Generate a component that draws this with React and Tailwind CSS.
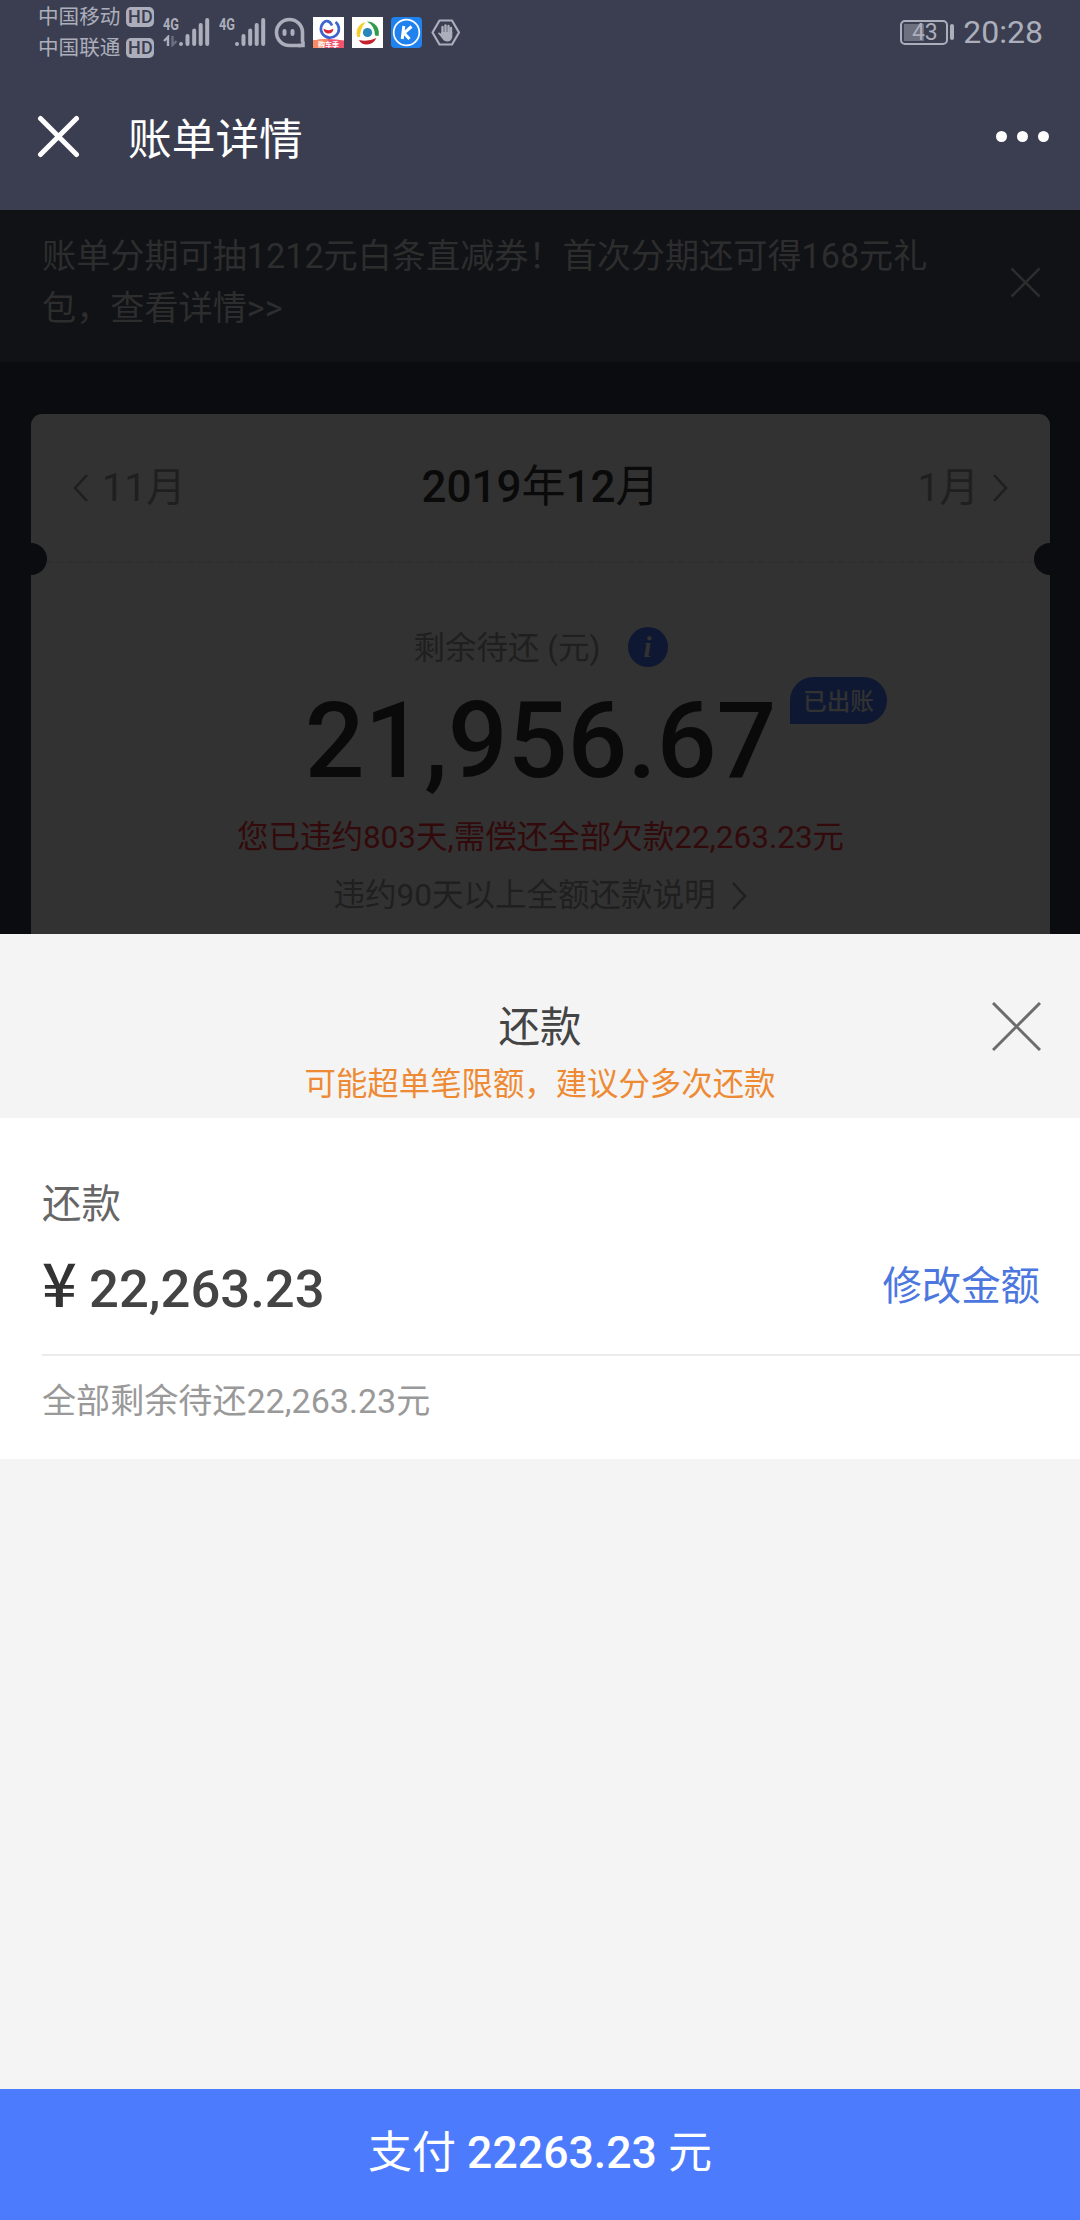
import React from 'react'

const STATUS = '#acaebb'

const Carrier = ({ name }) => (
    <div className="flex items-center h-[31px] gap-[6px]">
        <span className="text-[20.6px] leading-[31px]">{name}</span>
        <span className="flex items-center justify-center w-[28px] h-[20px] mb-px rounded-[5px] bg-[#acaebb] text-[#3b3e50] text-[18px] leading-[20px] font-medium">HD</span>
    </div>
)

const Signal = ({ data }) => (
    <div className="flex w-[47px] h-[32px]">
        <div className="w-[16px] text-[17px] leading-[15px] font-bold">
            <div className="w-[22px] origin-left scale-x-[0.75]">4G</div>
            {data && (
                <svg className="mt-[3px]" width="16" height="12" viewBox="0 0 16 12">
                    <path d="M5 11V2L1 6" fill="none" stroke={STATUS} strokeWidth="2.4" />
                    <path d="M9.5 1v9l4-4" fill="none" stroke="#6b6e7e" strokeWidth="2.4" />
                </svg>
            )}
        </div>
        <svg width="31" height="30" viewBox="0 0 31 30" stroke={STATUS} strokeWidth="4" strokeLinecap="round">
            <path d="M2 27v0M8.5 19v8M15.2 13.500v13.500M21.700 8v19M28.200 3v24" />
        </svg>
    </div>
)

const AppIcons = () => (
    <div className="flex items-center gap-[8px]">
        <svg width="31" height="31" viewBox="0 0 31 31" fill="none" stroke={STATUS}>
            <path d="M27 28.500H15.500A13 13 0 1 1 28.500 15.500V25" strokeWidth="3.6" />
            <path d="M24 28.500h5v-4" strokeWidth="3.600" />
            <path d="M10.500 14v3M18.500 14v3" strokeWidth="4" strokeLinecap="round" />
        </svg>
        <svg width="31" height="31" viewBox="0 0 31 31" fill="none">
            <path d="M0 0h31v31H0z" fill="#fff" />
            <path d="M0 23.500q15-3 31 0V31H0z" fill="#f0526f" />
            <path d="M0 23.500q8-2 15-1.500L10 31H0z" fill="#f98a62" />
            <path d="M19 8.500Q17 3.500 12.500 4.200A9 8.800 0 1 0 22.500 5" stroke="#3c63cf" strokeWidth="2.600" />
            <path d="M10.500 11.500q5 3.500 10 0-.5 5-5 5t-5-5z" fill="#d8293b" />
            <text x="15.500" y="29.500" fill="#fff" fontSize="7" fontWeight="700" textAnchor="middle">购车季</text>
        </svg>
        <svg width="31" height="31" viewBox="0 0 31 31" fill="none">
            <path d="M0 0h31v31H0z" fill="#fff" />
            <path d="M5.500 20A11 11 0 0 1 13.500 5Q8 12 8 20z" fill="#f4cf2c" />
            <path d="M15 4.500A11.500 11.500 0 0 1 26.500 19l-3.500-.5Q23 9 15 4.500z" fill="#2f9c49" />
            <path d="M7 23q9 2 17.500-2Q21 27.500 15 27.500T7 23z" fill="#c5202d" />
            <circle cx="15.500" cy="15.500" r="4.600" fill="#2787b8" />
        </svg>
        <svg width="31" height="31" viewBox="0 0 31 31" fill="none" stroke="#fff">
            <rect width="31" height="31" rx="4" fill="#2082ee" stroke="none" />
            <circle cx="15.500" cy="15.500" r="12.800" strokeWidth="1.700" />
            <path d="M12.800 9l-1.600 13M20.500 9.500l-7.500 6.500 5.500 6" strokeWidth="3" />
        </svg>
        <svg width="31" height="31" viewBox="0 0 31 31" fill="none" stroke={STATUS}>
            <path d="M9.500 3.500h12.500L29 15.500l-7 12H9.500l-7-12z" strokeWidth="2.200" strokeLinejoin="round" />
            <path d="M12.500 17v-7M15.500 15V8.500M18.500 15V9M21 16v-5" strokeWidth="2.400" strokeLinecap="round" />
            <path d="M11.300 15h11v5q-1 4.500-5 4.500-3.500 0-5-3L7.800 16q1.500-1.500 3.500 1z" fill={STATUS} stroke="none" />
        </svg>
    </div>
)

const StatusBar = () => (
    <div className="flex justify-between h-[64px] pl-[38px] pr-[37px] text-[#acaebb]">
        <div className="flex">
            <div className="w-[125px] pt-[2px]">
                <Carrier name="中国移动" />
                <Carrier name="中国联通" />
            </div>
            <div className="flex gap-[9px] pt-[17px]">
                <Signal data />
                <Signal />
            </div>
            <div className="pl-[8px] pt-[17px]">
                <AppIcons />
            </div>
        </div>
        <div className="flex items-center h-[64px]">
            <div className="flex items-center">
                <div className="relative flex items-center justify-center w-[48px] h-[25px] border-2 border-[#acaebb] rounded-[5px]">
                    <div className="absolute left-[2px] top-[2px] w-[20px] h-[17px] bg-[#6d707f]"></div>
                    <span className="relative pl-px text-[23px] leading-[25px]">43</span>
                </div>
                <div className="w-[4px] h-[16px] ml-[2px] rounded-[2px] bg-[#acaebb]"></div>
            </div>
            <span className="ml-[9px] text-[32px] leading-[64px]">20:28</span>
        </div>
    </div>
)

const Navbar = () => (
    <div className="flex items-center justify-between h-[146px] pl-[37px] pr-[31px] pb-[2px] text-white">
        <div className="flex items-center">
            <svg width="43" height="43" viewBox="0 0 43 43" stroke="#fff" strokeWidth="5" strokeLinecap="round">
                <path d="M3.500 3.500l36 36M39.500 3.500l-36 36" />
            </svg>
            <h1 className="ml-[48px] pt-[7px] text-[43.7px] leading-[60px]">账单详情</h1>
        </div>
        <div className="flex gap-[10px]">
            <i className="size-[11px] rounded-full bg-white"></i>
            <i className="size-[11px] rounded-full bg-white"></i>
            <i className="size-[11px] rounded-full bg-white"></i>
        </div>
    </div>
)

const Notice = () => (
    <div className="flex justify-between h-[152px] pl-[42px] pr-[39px] pt-[20px] bg-[#111216] text-[#2d2d2d]">
        <p className="w-[900px] text-[34.15px] leading-[52px]">账单分期可抽1212元白条直减券！首次分期还可得168元礼包，查看详情&gt;&gt;</p>
        <svg className="mt-[37px]" width="31" height="31" viewBox="0 0 31 31" stroke="#2d2d2d" strokeWidth="2.500">
            <path d="M1.500 1.500l28 28M29.500 1.500l-28 28" />
        </svg>
    </div>
)

const Chevron = ({ left, w = 15, h = 28 }) => (
    <svg className={left ? 'rotate-180' : ''} width={w} height={h} viewBox="0 0 15 28" fill="none" stroke="#1f1f1f" strokeWidth="2.500">
        <path d="M1 1l12 13L1 27" />
    </svg>
)

const BillCard = () => (
    <div className="relative ml-[31px] mr-[30px] mt-[52px] h-[520px] rounded-t-[11px] bg-[#323232] text-[#1f1f1f]">
        <div className="flex items-center justify-between h-[147px] px-[42px]">
            <div className="flex items-center gap-[14px] w-[150px]">
                <Chevron left />
                <span className="text-[39.4px] leading-[56px]">11月</span>
            </div>
            <h2 className="pb-[2px] text-[44px] leading-[56px] font-medium text-[#0a0a0a]">
                2019<span className="font-normal">年</span>12<span className="font-normal">月</span>
            </h2>
            <div className="flex items-center justify-end gap-[14px] w-[150px]">
                <span className="text-[39.4px] leading-[56px]">1月</span>
                <Chevron />
            </div>
        </div>
        <div className="mx-[16px] border-t-2 border-dashed border-[#2f2f2f]"></div>
        {/* ticket notches */}
        <div className="absolute left-0 top-[129px] w-[16px] h-[32px] rounded-r-full bg-[#0b0c10]"></div>
        <div className="absolute right-0 top-[129px] w-[16px] h-[32px] rounded-l-full bg-[#0b0c10]"></div>

        <div className="flex items-center justify-center mt-[60px] h-[48px] gap-[27px] text-[31.5px]">
            <span className="pt-[4px]">剩余待还 (元)</span>
            <span className="flex items-center justify-center size-[40px] rounded-full bg-[#0f1833] text-[#323232] text-[29px] leading-[40px] font-bold italic font-[Liberation_Serif,serif]">i</span>
        </div>
        <div className="relative flex justify-center h-[126px] text-[105.3px] leading-[140px] font-medium text-[#0a0a0a]">
            21,956.67
            <span className="absolute left-[759px] top-[6px] w-[97px] h-[47px] rounded-[24px] rounded-bl-none bg-[#0f1833] text-[#323232] text-center text-[23.6px] leading-[50px] font-medium">已出账</span>
        </div>
        <p className="mt-[17px] text-center text-[31.5px] leading-[48px] text-[#330a0c]">您已违约803天,需偿还全部欠款22,263.23元</p>
        <div className="flex items-center justify-center mt-[10px] gap-[17px] text-[31.5px] leading-[48px]">
            <span>违约90天以上全额还款说明</span>
            <Chevron />
        </div>
    </div>
)

const RepaySheet = () => (
    <div className="flex flex-col h-[1286px] bg-[#f4f4f4]">
        <div className="relative h-[184px] pt-[65px] text-center">
            <h3 className="text-[41.5px] leading-[58px] text-[#444]">还款</h3>
            <p className="mt-[3px] text-[31.4px] leading-[50px] text-[#ee8a33]">可能超单笔限额，建议分多次还款</p>
            <svg className="absolute left-[992px] top-[68px]" width="49" height="49" viewBox="0 0 49 49" stroke="#6c6c6c" strokeWidth="3">
                <path d="M1 1l47 47M48 1L1 48" />
            </svg>
        </div>
        <div className="h-[341px] pl-[42px] bg-white">
            <div className="pt-[59px] text-[39.4px] leading-[56px] text-[#666]">还款</div>
            <div className="flex items-center justify-between h-[80px] mt-[14px] pr-[40px]">
                <div className="flex items-baseline pb-[5px] text-[#444]">
                    <span className="w-[47px] text-[61px] leading-[70px] font-medium text-[#333] font-['Noto_Sans_CJK_SC',sans-serif]">¥</span>
                    <span className="text-[52.6px] leading-[70px] font-medium">22,263.23</span>
                </div>
                <button className="text-[39.4px] text-[#4c77de]">修改金额</button>
            </div>
            <div className="mt-[27px] border-t-2 border-[#ebebeb]"></div>
            <div className="mt-[21px] text-[34.1px] leading-[48px] text-[#999]">全部剩余待还22,263.23元</div>
        </div>
        <button className="flex items-baseline justify-center gap-[11px] mt-auto h-[131px] bg-[#4c7bfe] text-white text-[44px] leading-[128px]">
            <span>支付</span>
            <span className="text-[44.6px] font-medium">22263.23</span>
            <span>元</span>
        </button>
    </div>
)

const App = () => {
    return (
        <div className="w-[1080px] h-[2220px] overflow-hidden bg-[#0b0c10] font-[Roboto,'Noto_Sans_CJK_SC',sans-serif]">
            <div className="bg-[#3b3e50]">
                <StatusBar />
                <Navbar />
            </div>
            <Notice />
            <BillCard />
            <RepaySheet />
        </div>
    )
}

export default App
